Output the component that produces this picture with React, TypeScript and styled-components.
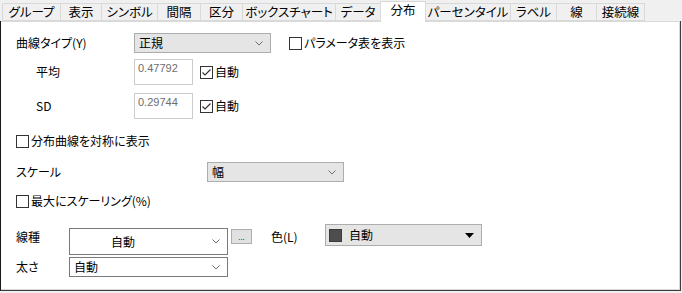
import React from 'react';
import styled, { createGlobalStyle } from 'styled-components';

const GlobalStyle = createGlobalStyle`
  html, body {
    margin: 0;
    padding: 0;
    background: #f0f0f0;
  }

  body {
    font-family: "Noto Sans CJK JP", "Noto Sans", sans-serif;
    font-size: 12px;
    color: #000;
    font-feature-settings: "palt";
  }
`;

const Window = styled.div`
  display: flex;
  flex-direction: column;

  width: 682px;
  height: 293px;
  box-sizing: border-box;

  background: #f0f0f0;
`;

const TabStrip = styled.div`
  display: flex;
  align-items: flex-end;

  height: 21px;
  padding-left: 2px;
  flex-shrink: 0;
`;

const Tab = styled.div<{ $w: number; $active?: boolean }>`
  position: relative;
  z-index: ${(p) => (p.$active ? 2 : 1)};
  display: flex;
  align-items: center;
  justify-content: center;

  width: ${(p) => p.$w}px;
  height: ${(p) => (p.$active ? 21 : 18)}px;
  margin-left: -1px;
  margin-bottom: ${(p) => (p.$active ? -1 : 0)}px;
  box-sizing: border-box;

  border: 1px solid #d9d9d9;
  border-bottom: ${(p) => (p.$active ? 'none' : '1px solid #d9d9d9')};
  background: ${(p) => (p.$active ? '#fff' : '#f0f0f0')};

  font-size: 12.5px;
  line-height: 1;
  padding-bottom: ${(p) => (p.$active ? 4 : 0)}px;
  white-space: nowrap;

  &:first-child {
    margin-left: 0;
  }
`;

const Frame = styled.div`
  flex: 1;
  display: flex;

  margin: 0 1px 2px 0;
  border-left: 1px solid #1a1a1a;
  border-right: 1px solid #3c3c3c;
  border-bottom: 1px solid #3c3c3c;
`;

const Panel = styled.div`
  flex: 1;
  display: flex;
  flex-direction: column;

  padding: 11px 0 0 15px;
  border: 1px solid #d9d9d9;
  border-left: none;
  background: #fff;
`;

const Row = styled.div<{ $mt: number; $h: number; $top?: boolean }>`
  display: flex;
  align-items: ${(p) => (p.$top ? 'flex-start' : 'center')};

  height: ${(p) => p.$h}px;
  margin-top: ${(p) => p.$mt}px;
`;

const Label = styled.span<{ $w: number; $indent?: number; $mt?: number; $ml?: number }>`
  flex-shrink: 0;

  width: ${(p) => p.$w}px;
  padding-left: ${(p) => p.$indent ?? 0}px;
  margin-top: ${(p) => p.$mt ?? 0}px;
  margin-left: ${(p) => p.$ml ?? 0}px;
  box-sizing: border-box;

  line-height: 14px;
  white-space: nowrap;
`;

const Combo = styled.div<{ $w: number; $h: number; $flat?: boolean; $mt?: number; $pl?: number }>`
  display: flex;
  align-items: center;
  flex-shrink: 0;

  width: ${(p) => p.$w}px;
  height: ${(p) => p.$h}px;
  margin-top: ${(p) => p.$mt ?? 0}px;
  padding: 0 7px 0 ${(p) => p.$pl ?? 4}px;
  box-sizing: border-box;

  border: 1px solid ${(p) => (p.$flat ? '#adadad' : '#7a7a7a')};
  background: ${(p) => (p.$flat ? '#e5e5e5' : '#fff')};
`;

const ComboText = styled.span`
  flex: 1;
  line-height: 14px;
  white-space: nowrap;
`;

const TextBox = styled.div`
  flex-shrink: 0;

  width: 59px;
  height: 26px;
  padding: 2px 3px;
  box-sizing: border-box;

  border: 1px solid #cccccc;
  background: #fff;

  font-family: "Liberation Sans", sans-serif;
  font-size: 11px;
  line-height: 13px;
  color: #6d6d6d;
`;

const CheckLabel = styled.label<{ $ml?: number }>`
  display: flex;
  align-items: center;
  gap: 2px;

  margin-left: ${(p) => p.$ml ?? 0}px;
  line-height: 14px;
  white-space: nowrap;
`;

const Box = styled.span`
  display: flex;
  align-items: center;
  justify-content: center;

  width: 13px;
  height: 13px;
  box-sizing: border-box;

  border: 1px solid #333;
  background: #fff;
`;

const DotsButton = styled.div`
  display: flex;
  align-items: flex-end;
  justify-content: center;
  flex-shrink: 0;

  width: 21px;
  height: 15px;
  margin: 5px 0 0 3px;
  box-sizing: border-box;

  border: 1px solid #adadad;
  background: #e1e1e1;

  font-family: "Liberation Sans", sans-serif;
  font-size: 8px;
  line-height: 10px;
`;

const Swatch = styled.span<{ $color: string }>`
  width: 13px;
  height: 13px;
  margin-right: 7px;
  box-sizing: border-box;

  border: 1px solid #3a3a3a;
  background: ${(p) => p.$color};
`;

const Chevron = () => (
  <svg width="8" height="5" viewBox="0 0 8 5">
    <polyline points="0.5,0.5 4,4 7.5,0.5" fill="none" stroke="#707070" strokeWidth="1" />
  </svg>
);

const DropTriangle = () => (
  <svg width="9" height="5" viewBox="0 0 9 5">
    <polygon points="0,0 9,0 4.5,5" fill="#000" />
  </svg>
);

type CheckProps = { checked?: boolean; text: string; ml?: number };

const Check = ({ checked, text, ml }: CheckProps) => (
  <CheckLabel $ml={ml}>
    <Box>
      {checked && (
        <svg width="11" height="11" viewBox="0 0 11 11">
          <polyline points="1.5,5.5 4,8 9.5,2.5" fill="none" stroke="#333" strokeWidth="1.2" />
        </svg>
      )}
    </Box>
    {text}
  </CheckLabel>
);

const tabs = [
  { name: 'グループ', w: 59 },
  { name: '表示', w: 42 },
  { name: 'シンボル', w: 57 },
  { name: '間隔', w: 44 },
  { name: '区分', w: 43 },
  { name: 'ボックスチャート', w: 94 },
  { name: 'データ', w: 46 },
  { name: '分布', w: 46, active: true },
  { name: 'パーセンタイル', w: 86 },
  { name: 'ラベル', w: 47 },
  { name: '線', w: 41 },
  { name: '接続線', w: 49 },
];

const App = () => (
  <>
    <GlobalStyle />
    <Window>
      <TabStrip>
        {tabs.map((t) => (
          <Tab key={t.name} $w={t.w} $active={t.active}>{t.name}</Tab>
        ))}
      </TabStrip>
      <Frame>
        <Panel>
          <Row $mt={0} $h={20}>
            <Label $w={118}>曲線タイプ(Y)</Label>
            <Combo $w={137} $h={20} $flat>
              <ComboText>正規</ComboText>
              <Chevron />
            </Combo>
            <Check ml={18} text="パラメータ表を表示" />
          </Row>
          <Row $mt={6} $h={26}>
            <Label $w={118} $indent={20}>平均</Label>
            <TextBox>0.47792</TextBox>
            <Check ml={7} checked text="自動" />
          </Row>
          <Row $mt={8} $h={26}>
            <Label $w={118} $indent={20}>SD</Label>
            <TextBox>0.29744</TextBox>
            <Check ml={7} checked text="自動" />
          </Row>
          <Row $mt={15} $h={14}>
            <Check text="分布曲線を対称に表示" />
          </Row>
          <Row $mt={14} $h={20}>
            <Label $w={191}>スケール</Label>
            <Combo $w={137} $h={20} $flat>
              <ComboText>幅</ComboText>
              <Chevron />
            </Combo>
          </Row>
          <Row $mt={12} $h={14}>
            <Check text="最大にスケーリング(%)" />
          </Row>
          <Row $mt={16} $h={31} $top>
            <Label $w={53} $mt={6}>線種</Label>
            <Combo $w={159} $h={27} $mt={4} $pl={41}>
              <ComboText>自動</ComboText>
              <Chevron />
            </Combo>
            <DotsButton>...</DotsButton>
            <Label $w={54} $mt={6} $ml={19}>色(L)</Label>
            <Combo $w={157} $h={22} $flat $pl={3}>
              <Swatch $color="#4d4d4d" />
              <ComboText>自動</ComboText>
              <DropTriangle />
            </Combo>
          </Row>
          <Row $mt={2} $h={20}>
            <Label $w={53}>太さ</Label>
            <Combo $w={159} $h={20}>
              <ComboText>自動</ComboText>
              <Chevron />
            </Combo>
          </Row>
        </Panel>
      </Frame>
    </Window>
  </>
);

export default App;
